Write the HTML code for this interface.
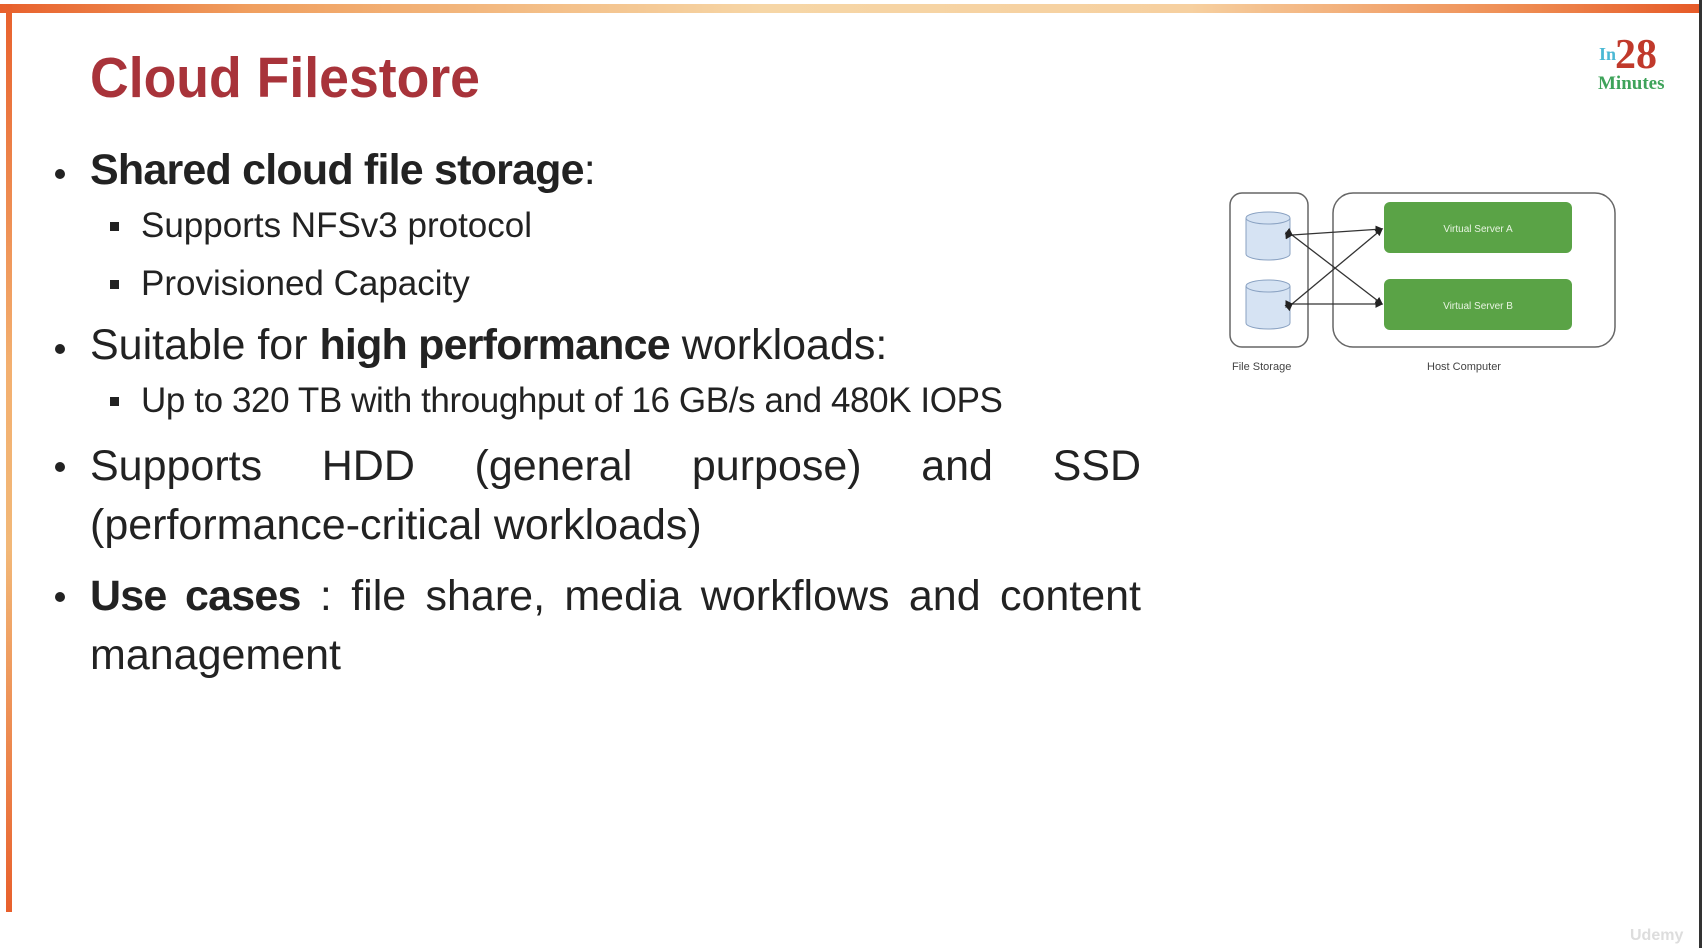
<!DOCTYPE html>
<html><head><meta charset="utf-8"><style>
html,body{margin:0;padding:0;}
body{width:1702px;height:948px;position:relative;overflow:hidden;background:#fff;font-family:"Liberation Sans",sans-serif;}
.topbar{position:absolute;left:0;top:4px;width:1700px;height:9px;background:linear-gradient(90deg,#e8602c 0%,#f0a060 15%,#f6d6a6 45%,#f6d0a0 70%,#ee8a50 90%,#e65a28 100%);}
.leftbar{position:absolute;left:6px;top:4px;width:6px;height:908px;background:linear-gradient(180deg,#e8602c 0%,#f3b070 40%,#f2b878 60%,#e8602c 100%);}
.rightedge{position:absolute;left:1699px;top:0;width:3px;height:948px;background:#333;}
.txt{position:absolute;left:0;top:3px;width:1702px;height:948px;}
.l{position:absolute;white-space:nowrap;color:#222;}
.b1{font-size:43px;line-height:43px;}
.b2{font-size:35px;line-height:35px;}
b{letter-spacing:-0.8px;}
.dot{position:absolute;width:10px;height:10px;border-radius:50%;background:#222;}
.sq{position:absolute;width:9px;height:9px;background:#222;}
.j{position:absolute;left:90px;width:1051px;font-size:43px;line-height:59px;text-align:justify;color:#222;}
</style></head><body>
<div class="topbar"></div>
<div class="leftbar"></div>
<div class="rightedge"></div>
<div class="l" style="left:90px;top:50px;font-size:57px;line-height:57px;font-weight:bold;color:#a8333a;transform:scaleX(0.94);transform-origin:0 0;">Cloud Filestore</div>
<div class="txt">
 <div class="dot" style="left:55px;top:166px;"></div>
 <div class="l b1" style="left:90px;top:146px;"><b>Shared cloud file storage</b>:</div>
 <div class="sq" style="left:110px;top:219px;"></div>
 <div class="l b2" style="left:141px;top:205px;">Supports NFSv3 protocol</div>
 <div class="sq" style="left:110px;top:277px;"></div>
 <div class="l b2" style="left:141px;top:263px;">Provisioned Capacity</div>

 <div class="dot" style="left:55px;top:341px;"></div>
 <div class="l b1" style="left:90px;top:321px;">Suitable for <b>high performance</b> workloads:</div>
 <div class="sq" style="left:110px;top:394px;"></div>
 <div class="l b2" style="left:141px;top:380px;letter-spacing:-0.4px;">Up to 320 TB with throughput of 16 GB/s and 480K IOPS</div>

 <div class="dot" style="left:55px;top:459px;"></div>
 <div class="j" style="top:434px;">Supports HDD (general purpose) and SSD (performance-critical workloads)</div>

 <div class="dot" style="left:55px;top:589px;"></div>
 <div class="j" style="top:564px;"><b>Use cases</b> : file share, media workflows and content management</div>
</div>

<svg style="position:absolute;left:0;top:0" width="1702" height="948">
 <defs><marker id="a" markerWidth="6" markerHeight="6" refX="5" refY="3" orient="auto"><path d="M0,0 L6,3 L0,6z" fill="#222"/></marker></defs>
 <rect x="1230" y="193" width="78" height="154" rx="12" fill="none" stroke="#666" stroke-width="1.5"/>
 <rect x="1333" y="193" width="282" height="154" rx="20" fill="none" stroke="#666" stroke-width="1.5"/>
 <rect x="1384" y="202" width="188" height="51" rx="6" fill="#5aa346"/>
 <rect x="1384" y="279" width="188" height="51" rx="6" fill="#5aa346"/>
 <text x="1478" y="232" font-size="10" fill="#e8f4e2" text-anchor="middle" font-family="Liberation Sans">Virtual Server A</text>
 <text x="1478" y="309" font-size="10" fill="#e8f4e2" text-anchor="middle" font-family="Liberation Sans">Virtual Server B</text>
 <g fill="#d6e3f3" stroke="#8aa2c2" stroke-width="1">
  <path d="M1246,218 v36 a22,6 0 0 0 44,0 v-36"/><ellipse cx="1268" cy="218" rx="22" ry="6"/>
  <path d="M1246,286 v37 a22,6 0 0 0 44,0 v-37"/><ellipse cx="1268" cy="286" rx="22" ry="6"/>
 </g>
 <g stroke="#333" stroke-width="1.3" marker-end="url(#a)" marker-start="url(#a)">
  <line x1="1292" y1="235" x2="1382" y2="229"/>
  <line x1="1292" y1="235" x2="1382" y2="304"/>
  <line x1="1292" y1="304" x2="1382" y2="229"/>
  <line x1="1292" y1="304" x2="1382" y2="304"/>
 </g>
 <text x="1232" y="370" font-size="11" fill="#444" font-family="Liberation Sans">File Storage</text>
 <text x="1427" y="370" font-size="11" fill="#444" font-family="Liberation Sans">Host Computer</text>
 <text x="1599" y="60" font-size="18" fill="#4bb8d4" font-family="Liberation Serif" font-weight="bold">In</text>
 <text x="1615" y="68" font-size="42" fill="#c0392b" font-family="Liberation Serif" font-weight="bold">28</text>
 <text x="1598" y="89" font-size="19" fill="#3ea35a" font-family="Liberation Serif" font-weight="bold">Minutes</text>
 <text x="1630" y="940" font-size="16" fill="#ddd" font-family="Liberation Sans" font-weight="bold">Udemy</text>
</svg>
</body></html>
